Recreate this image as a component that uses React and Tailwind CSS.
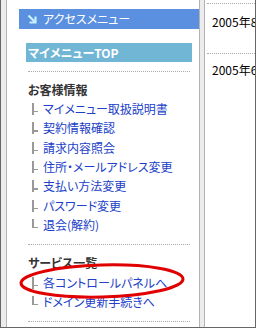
import React from "react";

const FONT = "font-['Noto_Sans_CJK_JP','Noto_Sans',sans-serif] [font-feature-settings:'palt']";

function Branch({ last }) {
  return (
    <span className="relative inline-block w-[13px] h-[12px] flex-none">
      <span className={`absolute left-[2px] top-0 w-[1.5px] bg-[#999] ${last ? "h-[9px]" : "h-[12px]"}`} />
      <span className="absolute left-[2px] top-[8px] w-[6px] h-[1.5px] bg-[#999]" />
    </span>
  );
}

function Item({ children, last }) {
  return (
    <div className="h-[19.33px] flex items-center pl-[23px]">
      <Branch last={last} />
      <span className="text-[12px] leading-none text-[#2040c8] whitespace-nowrap">{children}</span>
    </div>
  );
}

function Header({ children }) {
  return (
    <div className="h-[19.33px] flex items-center pl-[21px] text-[12px] font-bold text-[#333] leading-none">
      {children}
    </div>
  );
}

function Dotted() {
  return <div className="ml-[21px] w-[162px] border-t border-dotted border-[#aaa]" />;
}

export default function App() {
  const info = [
    "マイメニュー取扱説明書",
    "契約情報確認",
    "請求内容照会",
    "住所・メールアドレス変更",
    "支払い方法変更",
    "パスワード変更",
    "退会(解約)",
  ];
  return (
    <div className={`relative w-[256px] h-[328px] flex border-x border-b border-[#666] bg-white overflow-hidden ${FONT}`}>
      <div className="w-[5px] flex-none bg-[#ececec]" />
      <div className="w-[194px] flex-none border-x border-[#b4b4b4] bg-white flex flex-col">
        <div className="h-[9px]" />
        <div className="ml-[12px] h-[20px] bg-[#5b8fe0] flex items-center">
          <svg width="10" height="10" viewBox="0 0 10 10" className="ml-[8px]">
            <path d="M1.5 1.5 L7.5 7.5" stroke="#c6f2ff" strokeWidth="2.2" fill="none" />
            <path d="M2.5 8.5 H8.5 V2.5" stroke="#c6f2ff" strokeWidth="2.2" fill="none" />
          </svg>
          <span className="ml-[6px] text-[12px] leading-none text-white">アクセスメニュー</span>
        </div>
        <div className="h-[14px]" />
        <div className="ml-[19px] w-[166px] h-[19px] bg-[#72b6d6] flex items-center pl-[2px]">
          <span className="text-[12px] font-bold leading-none text-white">マイメニューTOP</span>
        </div>
        <div className="h-[9px]" />
        <Dotted />
        <div className="h-[8px]" />
        <Header>お客様情報</Header>
        {info.map((t, i) => (
          <Item key={t} last={i === info.length - 1}>{t}</Item>
        ))}
        <div className="h-[9px]" />
        <Dotted />
        <div className="h-[9px]" />
        <Header>サービス一覧</Header>
        <Item>各コントロールパネルへ</Item>
        <Item last>ドメイン更新手続きへ</Item>
        <div className="h-[9px]" />
        <Dotted />
      </div>
      <div className="w-[4px] flex-none bg-[#ececec]" />
      <div className="flex-1 border-l border-[#b4b4b4] bg-white flex flex-col overflow-hidden">
        <div className="h-[3px]" />
        <div className="ml-[2px] border-t border-dotted border-[#aaa]" />
        <div className="h-[10px]" />
        <div className="pl-[7px] text-[12px] leading-[16px] text-black whitespace-nowrap">2005年8月</div>
        <div className="h-[23px]" />
        <div className="ml-[2px] border-t border-dotted border-[#aaa]" />
        <div className="h-[8px]" />
        <div className="pl-[7px] text-[12px] leading-[16px] text-black whitespace-nowrap">2005年6月</div>
      </div>
      <svg className="absolute left-[18px] top-[263px] pointer-events-none" width="166" height="36" viewBox="0 0 166 36">
        <ellipse cx="83" cy="18" rx="81" ry="16" fill="none" stroke="#e00000" strokeWidth="3" transform="rotate(-1.5 83 18)" />
      </svg>
    </div>
  );
}
